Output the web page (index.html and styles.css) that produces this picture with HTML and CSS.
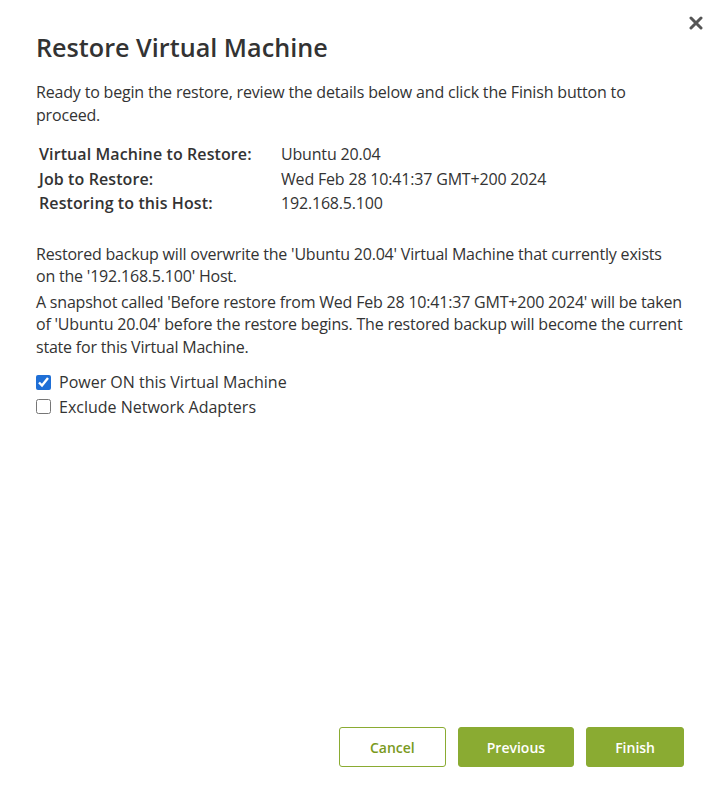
FILE: index.html
```html
<!DOCTYPE html>
<html lang="en">
<head>
  <meta charset="UTF-8">
  <meta name="viewport" content="width=device-width, initial-scale=1.0">
  <title>Restore Virtual Machine</title>
  <link rel="stylesheet" href="styles.css">
</head>
<body>
  <div class="dialog">
    <button class="close-button" aria-label="Close">
      <svg width="14" height="14" viewBox="0 0 14 14">
        <path d="M2 2 L12 12 M12 2 L2 12" stroke="#555" stroke-width="3" stroke-linecap="round"></path>
      </svg>
    </button>
    <h1 class="dialog-title">Restore Virtual Machine</h1>
    <div class="dialog-body">
      <p class="intro">Ready to begin the restore, review the details below and click the Finish button to proceed.</p>
      <table class="summary">
        <tr><th>Virtual Machine to Restore:</th><td>Ubuntu 20.04</td></tr>
        <tr><th>Job to Restore:</th><td>Wed Feb 28 10:41:37 GMT+200 2024</td></tr>
        <tr><th>Restoring to this Host:</th><td>192.168.5.100</td></tr>
      </table>
      <p class="note">Restored backup will overwrite the 'Ubuntu 20.04' Virtual Machine that currently exists on the '192.168.5.100' Host.</p>
      <p class="note">A snapshot called 'Before restore from Wed Feb 28 10:41:37 GMT+200 2024' will be taken of 'Ubuntu 20.04' before the restore begins. The restored backup will become the current state for this Virtual Machine.</p>
      <div class="options">
        <label class="option"><input type="checkbox" checked> Power ON this Virtual Machine</label>
        <label class="option"><input type="checkbox"> Exclude Network Adapters</label>
      </div>
    </div>
    <div class="dialog-footer">
      <button class="btn btn-outline">Cancel</button>
      <button class="btn btn-primary">Previous</button>
      <button class="btn btn-primary">Finish</button>
    </div>
  </div>
</body>
</html>
```

FILE: styles.css
```css
body, html {
  margin: 0;
  padding: 0;
  height: 100%;
  background: #fff;
  font-family: 'Open Sans', sans-serif;
  color: #333;
}
.dialog {
  position: relative;
  display: flex;
  flex-direction: column;
  height: 100%;
  box-sizing: border-box;
  padding: 30px 36px 30px 36px;
}
.close-button {
  position: absolute;
  top: 16px;
  right: 17px;
  background: none;
  border: none;
  padding: 0;
  cursor: pointer;
}
.dialog-title {
  margin: 0;
  font-size: 25.2px;
  font-weight: 600;
  line-height: 34px;
  color: #333;
}
.dialog-body {
  flex: 1;
  font-size: 16px;
  letter-spacing: -0.18px;
}
.intro {
  margin: 17px 0 15px;
  line-height: 23px;
}
.summary {
  border-collapse: collapse;
  margin-bottom: 27px;
}
.summary th {
  text-align: left;
  font-weight: 600;
  letter-spacing: 0.1px;
  padding: 0 0 0 3px;
  width: 242px;
  line-height: 24.5px;
}
.summary td {
  padding: 0;
  line-height: 24.5px;
}
.note {
  margin: 0 0 3px;
  line-height: 22.5px;
  letter-spacing: -0.2px;
}
.options {
  margin-top: 12px;
}
.option {
  display: flex;
  align-items: center;
  line-height: 24.5px;
  letter-spacing: 0;
}
.option input {
  margin: 0 8px 0 0;
  width: 15px;
  height: 15px;
  accent-color: #1f6fd6;
}
.dialog-footer {
  display: flex;
  justify-content: flex-end;
  gap: 12px;
}
.btn {
  height: 40px;
  border-radius: 3px;
  font-family: 'Open Sans', sans-serif;
  font-size: 14px;
  font-weight: 600;
  padding: 0 28px;
  cursor: pointer;
}
.btn-outline {
  background: #fff;
  color: #7a9a1e;
  border: 1px solid #8aab32;
  padding: 0 30px;
}
.btn-primary {
  background: #8aab32;
  color: #fff;
  border: 1px solid #8aab32;
}
```
